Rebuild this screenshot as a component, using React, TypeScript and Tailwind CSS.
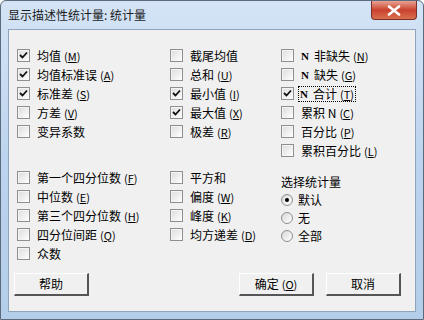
import React from 'react';

const font = { fontFamily: '"Noto Sans CJK SC", "Liberation Sans", sans-serif' };

function Key({ k }: { k: string }) {
  return (
    <span className="ml-[3px] text-[11px]">
      (<span className="underline">{k}</span>)
    </span>
  );
}

function Box({ checked }: { checked?: boolean }) {
  return (
    <span className="w-[13px] h-[13px] shrink-0 border border-[#8e8f8f] bg-gradient-to-br from-[#dcdcdc] to-white shadow-[inset_1px_1px_0_#f4f4f4] flex items-center justify-center">
      {checked && (
        <svg width="9" height="9" viewBox="0 0 9 9">
          <path d="M1 4 L3.5 6.5 L8 1.5" stroke="#111" strokeWidth="1.8" fill="none" />
        </svg>
      )}
    </span>
  );
}

function Check({ label, k, checked, focus, n }: { label: string; k?: string; checked?: boolean; focus?: boolean; n?: boolean }) {
  return (
    <div className="flex items-center h-[19px] gap-[5px]">
      <Box checked={checked} />
      <span className={`flex items-center leading-[14px] text-[12px] text-black px-[1px] ${focus ? 'outline outline-1 outline-dotted outline-black' : 'border border-transparent'}`}>
        {n && <span className="font-bold text-[11px] mr-[5px]" style={{ fontFamily: '"Liberation Serif", serif' }}>N</span>}
        {label}
        {k && <Key k={k} />}
      </span>
    </div>
  );
}

function Radio({ label, checked }: { label: string; checked?: boolean }) {
  return (
    <div className="flex items-center h-[18px] gap-[5px]">
      <span className="w-[12px] h-[12px] rounded-full border border-[#8e8f8f] bg-gradient-to-br from-[#d8d8d8] to-white flex items-center justify-center">
        {checked && <span className="w-[4px] h-[4px] rounded-full bg-black" />}
      </span>
      <span className="text-[12px] leading-[14px]">{label}</span>
    </div>
  );
}

function Btn({ label, k }: { label: string; k?: string }) {
  return (
    <button className="w-[75px] h-[23px] bg-[#f0f0f0] border-t border-l border-t-white border-l-white border-b-2 border-r-2 border-b-[#555] border-r-[#555] text-[12px] flex items-center justify-center">
      {label}
      {k && <Key k={k} />}
    </button>
  );
}

export default function App() {
  return (
    <div style={font} className="w-[424px] h-[320px] bg-gradient-to-b from-[#d4e4f6] via-[#bcd4ee] to-[#b4cde8] border border-[#5a6b7e] rounded-t-[6px] flex flex-col overflow-hidden">
      <div className="h-[28px] flex items-start justify-between pl-[7px] pr-[6px]">
        <span className="mt-[5px] text-[12px] text-[#1a1a1a]">显示描述性统计量: 统计量</span>
        <div className="w-[46px] h-[19px] rounded-b-[4px] border border-t-0 border-[#7b2f2a] bg-gradient-to-b from-[#e8a293] via-[#c9412d] to-[#d9704f] flex items-center justify-center">
          <svg width="14" height="11" viewBox="0 0 14 11">
            <path d="M2 1.5 L12 9.5 M12 1.5 L2 9.5" stroke="#fff" strokeWidth="2.6" strokeLinecap="round" />
          </svg>
        </div>
      </div>
      <div className="mx-[7px] h-[283px] bg-[#f0f0f0] border border-[#8fa4bd] flex flex-col">
        <div className="pl-[8px] pt-[16px] grid grid-cols-[153px_111px_1fr]">
          <div className="flex flex-col">
            <Check label="均值" k="M" checked />
            <Check label="均值标准误" k="A" checked />
            <Check label="标准差" k="S" checked />
            <Check label="方差" k="V" />
            <Check label="变异系数" />
          </div>
          <div className="flex flex-col">
            <Check label="截尾均值" />
            <Check label="总和" k="U" />
            <Check label="最小值" k="I" checked />
            <Check label="最大值" k="X" checked />
            <Check label="极差" k="R" />
          </div>
          <div className="flex flex-col">
            <Check n label="非缺失" k="N" />
            <Check n label="缺失" k="G" />
            <Check n label="合计" k="T" checked focus />
            <Check label="累积 N" k="C" />
            <Check label="百分比" k="P" />
            <Check label="累积百分比" k="L" />
          </div>
        </div>
        <div className="pl-[8px] pt-[8px] grid grid-cols-[153px_111px_1fr]">
          <div className="flex flex-col">
            <Check label="第一个四分位数" k="F" />
            <Check label="中位数" k="E" />
            <Check label="第三个四分位数" k="H" />
            <Check label="四分位间距" k="Q" />
            <Check label="众数" />
          </div>
          <div className="flex flex-col">
            <Check label="平方和" />
            <Check label="偏度" k="W" />
            <Check label="峰度" k="K" />
            <Check label="均方递差" k="D" />
          </div>
          <div className="flex flex-col pt-[6px]">
            <span className="text-[12px] leading-[16px] mb-[1px]">选择统计量</span>
            <Radio label="默认" checked />
            <Radio label="无" />
            <Radio label="全部" />
          </div>
        </div>
        <div className="flex items-center pl-[5px] pr-[14px] pt-[10px]">
          <Btn label="帮助" />
          <div className="flex-1" />
          <Btn label="确定" k="O" />
          <div className="w-[12px]" />
          <Btn label="取消" />
        </div>
      </div>
    </div>
  );
}
